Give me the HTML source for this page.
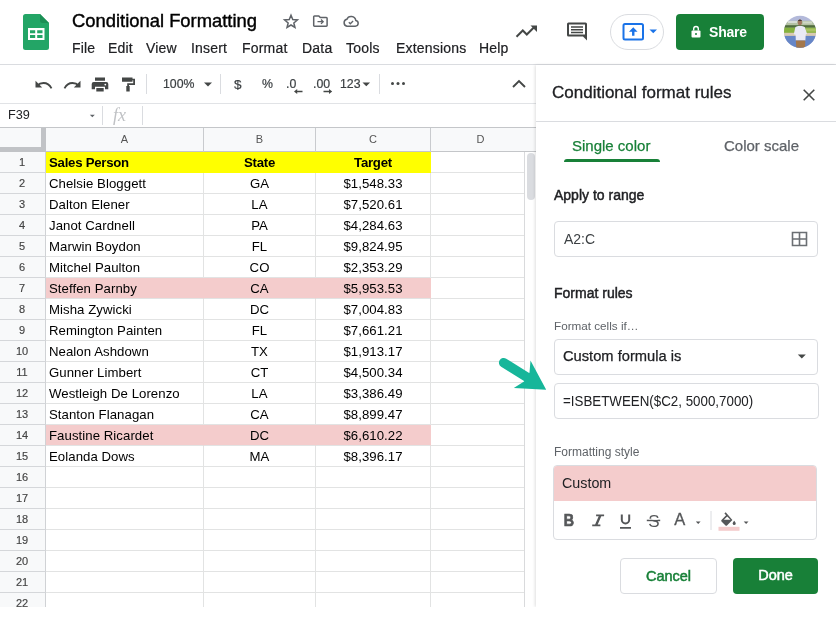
<!DOCTYPE html>
<html lang="en">
<head>
<meta charset="utf-8">
<title>Conditional Formatting</title>
<style>
*{box-sizing:border-box;margin:0;padding:0}
html,body{width:836px;height:637px;overflow:hidden;background:#fff;font-family:"Liberation Sans",sans-serif;color:#202124}
#app{will-change:transform;position:relative;width:836px;height:607px;overflow:hidden;background:#fff}
.abs{position:absolute}
/* top bar */
#top{position:absolute;left:0;top:0;width:836px;height:65px;background:#fff;border-bottom:1px solid #dadce0}
#title{position:absolute;left:72px;top:10px;font-size:18.4px;line-height:22px;color:#000;white-space:nowrap;-webkit-text-stroke:.4px #000}
#menu{position:absolute;left:72px;top:39px;font-size:14px;letter-spacing:.2px;line-height:18px;color:#202124;white-space:nowrap;-webkit-text-stroke:.2px #202124}
#menu span{position:absolute;top:0}
/* toolbar */
#tb{position:absolute;left:0;top:65px;width:536px;height:39px;background:#fff;border-bottom:1px solid #e1e3e6}
#fb{position:absolute;left:0;top:104px;width:536px;height:24px;background:#fff;border-bottom:1px solid #c4c6c9}
#fb .name{position:absolute;left:8px;top:4px;font-size:12.700px;line-height:15px;color:#202124}
#fb .fx{position:absolute;left:113px;top:0px;font-family:"Liberation Serif",serif;font-style:italic;font-size:18px;line-height:22px;color:#c0c2c5}
.tt{position:absolute;top:12px;font-size:12.300px;line-height:15px;color:#3c4043;white-space:nowrap;-webkit-text-stroke:.2px #3c4043}
/* grid */
#grid{position:absolute;left:0;top:128px;width:536px;height:479px;overflow:hidden;background:#fff}
#colh{position:absolute;left:0;top:0;height:24px;width:536px;background:#f8f9fa;border-bottom:1px solid #c4c6c9}
#colh div{position:absolute;top:0;height:24px;font-size:11px;line-height:23px;text-align:center;color:#555;border-right:1px solid #c9cbce}
.r{position:absolute;left:0;height:21px;width:525px}
.rh{position:absolute;left:0;top:0;width:46px;height:21px;background:#f8f9fa;border-right:1px solid #d0d2d5;border-bottom:1px solid #d5d7da;font-size:11px;line-height:20px;text-align:center;color:#444;padding-right:1px;-webkit-text-stroke:.15px #444}
.c{position:absolute;top:0;height:21px;border-right:1px solid #e2e3e3;border-bottom:1px solid #e2e3e3;font-size:13.2px;letter-spacing:.06px;line-height:22px;color:#000;white-space:nowrap;overflow:hidden}
.ca{left:46px;width:158px;padding-left:3px}
.cb{left:204px;width:112px;text-align:center}
.cc{left:316px;width:115px;text-align:center}
.cd{left:431px;width:93px;border-right:none}
.hdr .ca,.hdr .cb,.hdr .cc{background:#ffff00;font-weight:bold;border-color:#ffff00;letter-spacing:-.25px}
.hl .ca,.hl .cb,.hl .cc{background:#f4cccc;border-right-color:#f4cccc}
/* panel */
#panel{position:absolute;left:536px;top:65px;width:300px;height:542px;background:#fff;box-shadow:-1px 0 3px rgba(0,0,0,.13)}
#panel .ttl{position:absolute;left:16px;top:17px;font-size:17px;line-height:22px;color:#202124;white-space:nowrap;-webkit-text-stroke:.3px #202124}
.tab{position:absolute;top:72px;font-size:15px;line-height:18px;white-space:nowrap;-webkit-text-stroke:.25px currentColor}
.sec{position:absolute;left:18px;font-size:14px;line-height:18px;color:#202124;white-space:nowrap;-webkit-text-stroke:.45px #202124}
.lbl{position:absolute;left:18px;font-size:12px;line-height:16px;color:#5f6368;white-space:nowrap}
.box{position:absolute;left:18px;width:264px;height:36px;border:1px solid #dadce0;border-radius:4px;background:#fff;padding-left:9px;line-height:33px;white-space:nowrap}
.btn{position:absolute;border-radius:4px;font-size:14.500px;line-height:35px;text-align:center;-webkit-text-stroke:.5px currentColor;white-space:nowrap}
</style>
</head>
<body>
<div id="app">

<div id="top">
  <svg class="abs" style="left:23px;top:14px" width="26" height="36" viewBox="0 0 26 36">
    <path d="M2.5 0H17l9 9v24.5a2.5 2.5 0 0 1-2.5 2.5h-21A2.5 2.5 0 0 1 0 33.500V2.500A2.500 2.500 0 0 1 2.500 0z" fill="#23a566"/>
    <path d="M17 0l9 9h-6.500A2.500 2.500 0 0 1 17 6.500z" fill="#1c8f55"/>
    <path d="M5 14h16.500v12H5z" fill="#fff"/>
    <path d="M7 16.200h5.200v3H7zM14.200 16.200h5.300v3h-5.300zM7 21.100h5.200v3H7zM14.200 21.100h5.300v3h-5.300z" fill="#23a566"/>
  </svg>
  <svg class="abs" style="left:500px;top:0" width="336" height="64" viewBox="500 0 336 64">
    <!-- trending -->
    <path d="M516.500 36.800l6.300-6.300 4 4 7.800-7.800" fill="none" stroke="#444746" stroke-width="2"/>
    <path d="M530.500 25.500h6.500v6.500z" fill="#444746"/>
    <!-- comment -->
    <path d="M568.500 22.500h17a1.500 1.500 0 0 1 1.500 1.500v16.500l-4-4h-14.500a1.500 1.500 0 0 1-1.500-1.500V24a1.500 1.500 0 0 1 1.500-1.500z" fill="#444746"/>
    <path d="M569 24.500h16v10h-16z" fill="#fff"/>
    <path d="M571 27h12M571 29.700h12M571 32.400h12" stroke="#444746" stroke-width="1.500"/>
    <!-- present pill -->
    <rect x="610.500" y="14.500" width="53" height="35" rx="17.500" fill="#fff" stroke="#dadce0"/>
    <rect x="623.500" y="24" width="19.500" height="15.500" rx="1.500" fill="#fff" stroke="#1a73e8" stroke-width="2"/>
    <path d="M633.250 27.300l4.300 4.500h-3.100v4h-2.400v-4h-3.100z" fill="#1a73e8"/>
    <path d="M649.500 29.500h7.500l-3.750 3.800z" fill="#1a73e8"/>
    <!-- share -->
    <rect x="676" y="14" width="88" height="36" rx="4" fill="#188038"/>
    <path d="M692.500 30.500h7a1 1 0 0 1 1 1v5a1 1 0 0 1-1 1h-7a1 1 0 0 1-1-1v-5a1 1 0 0 1 1-1z" fill="#fff"/>
    <path d="M693.700 30.500v-1.700a2.300 2.300 0 0 1 4.600 0v1.700" fill="none" stroke="#fff" stroke-width="1.400"/>
    <circle cx="696" cy="34" r="1" fill="#188038"/>
    <!-- avatar -->
    <defs><clipPath id="av"><circle cx="800" cy="31.700" r="16"/></clipPath></defs>
    <g clip-path="url(#av)">
      <rect x="784" y="15" width="32" height="34" fill="#b3b9da"/>
      <rect x="784" y="20.800" width="32" height="5" fill="#b4c2a4"/>
      <rect x="788" y="21" width="9" height="2" fill="#d6dcd6"/>
      <rect x="803" y="21.500" width="9" height="2" fill="#cfd8c8"/>
      <rect x="784" y="25.200" width="32" height="2.600" fill="#506c3d"/>
      <rect x="784" y="27.600" width="32" height="5.400" fill="#86b23f"/>
      <rect x="806" y="28.500" width="10" height="3" fill="#a9c364"/>
      <rect x="784" y="32.800" width="32" height="3.200" fill="#d9cab3"/>
      <rect x="784" y="35.900" width="32" height="13" fill="#6686c7"/>
      <ellipse cx="799.900" cy="22.400" rx="2.100" ry="2.800" fill="#a07860"/>
      <path d="M797.900 21a2.100 2 0 0 1 4.100 0z" fill="#4a3a34"/>
      <path d="M795.300 27.300c1.400-1.700 7.900-1.700 9.600 0l2.100 6.500-1.300.8-.3 5.900h-9.600l-.2-5.700-1.800-.6z" fill="#e9eaf5"/>
      <path d="M795.800 40.400h9.500l-.3 8h-8.600z" fill="#a3774b"/>
    </g>
  </svg>
  <div class="abs" style="left:709px;top:23px;font-size:14px;line-height:18px;font-weight:bold;color:#fff;letter-spacing:-.2px">Share</div>
  <svg class="abs" style="left:280px;top:10px" width="84" height="22" viewBox="280 10 84 22">
    <g fill="none" stroke="#5f6368" stroke-width="1.500" stroke-linejoin="miter">
      <path d="M291 15.300l1.750 4.300 4.650.35-3.550 3 1.100 4.500-3.950-2.450-3.950 2.450 1.100-4.500-3.550-3 4.650-.35z"/>
      <path d="M314.500 16h4.300l1.500 1.600h6a.8.800 0 0 1 .8.800v7a.8.800 0 0 1-.8.800h-11.800a.8.800 0 0 1-.8-.8v-8.600a.8.800 0 0 1 .8-.8z"/>
      <path d="M317.500 21.700h5.500M321 19.500l2.200 2.200-2.200 2.200" stroke-width="1.300"/>
      <path d="M347 26.200h8.300a2.900 2.900 0 0 0 .5-5.750 4.700 4.700 0 0 0-9-1.100 3.500 3.500 0 0 0 .2 6.850z"/>
      <path d="M348.800 22.300l1.500 1.500 2.800-2.800" stroke-width="1.300"/>
    </g>
  </svg>
  <div id="title">Conditional Formatting</div>
  <div id="menu">
    <span style="left:0">File</span><span style="left:36px">Edit</span><span style="left:74px">View</span><span style="left:119px">Insert</span><span style="left:170px">Format</span><span style="left:230px">Data</span><span style="left:274px">Tools</span><span style="left:324px">Extensions</span><span style="left:407px">Help</span>
  </div>
</div>

<div id="tb">
  <svg class="abs" style="left:0;top:0" width="536" height="38" viewBox="0 65 536 38">
    <g fill="none" stroke="#444746" stroke-width="1.8" stroke-linecap="butt" stroke-linejoin="miter">
      <!-- undo -->
      <path d="M51.500 88.300c-1.700-3.300-4.600-5.300-8-5.300-2.500 0-4.700 1-6.300 2.700"/>
      <!-- redo -->
      <path d="M64.500 88.300c1.700-3.300 4.600-5.300 8-5.300 2.500 0 4.700 1 6.300 2.700"/>
    </g>
    <g fill="#444746">
      <path d="M35.500 80.800v6.700h6.700z"/>
      <path d="M80.500 80.800v6.700h-6.700z"/>
      <!-- print -->
      <path d="M95 77.500h10v3.300H95zM93.700 82h12.600a2 2 0 0 1 2 2v5.300h-3.300v-2.600H95v2.600h-3.300V84a2 2 0 0 1 2-2zM96.300 88h7.400v3.500h-7.400z"/>
      <circle cx="105.300" cy="84.600" r=".9" fill="#fff"/>
      <!-- paint format -->
      <path d="M122 77.500h10.500v4.300H122zM132.500 78.700h2.500v6.300h-6v1.500h-1.800V83.300h6V80.300h-.7zM126.300 86h3.400v5.500h-3.400z"/>
      <!-- zoom arrow -->
      <path d="M204 82.500h8l-4 4z"/>
      <!-- 123 arrow -->
      <path d="M362.500 82.500h7.600l-3.800 3.800z"/>
      <!-- dots -->
      <circle cx="392.500" cy="83.500" r="1.500"/><circle cx="398" cy="83.500" r="1.500"/><circle cx="403.500" cy="83.500" r="1.500"/>
      <!-- decimal arrows -->
      <path d="M294 91.500l3.200-2.600v1.900h5.300v1.400h-5.300v1.900z"/>
      <path d="M332.200 91.500l-3.200-2.600v1.900h-5.500v1.400h5.500v1.900z"/>
    </g>
    <path d="M513 87l6-6 6 6" fill="none" stroke="#444746" stroke-width="1.900"/>
    <path d="M146.500 74v20M220.500 74v20M379.500 74v20" stroke="#dadce0" stroke-width="1"/>
  </svg>
  <div class="tt" style="left:163px">100%</div>
  <div class="tt" style="left:234px;font-size:13.500px">$</div>
  <div class="tt" style="left:262px">%</div>
  <div class="tt" style="left:286px">.0</div>
  <div class="tt" style="left:313px">.00</div>
  <div class="tt" style="left:340px">123</div>
</div>
<div id="fb"><div class="name">F39</div>
  <svg class="abs" style="left:0;top:0" width="536" height="23" viewBox="0 104 536 23">
    <path d="M89.800 114.700h5l-2.500 2.600z" fill="#5f6368"/>
    <path d="M102.500 106v19M142.500 106v19" stroke="#dadce0" stroke-width="1"/>
  </svg>
  <div class="fx">fx</div></div>

<div id="grid">
  <div id="colh">
    <div style="left:0;width:46px"></div>
    <div style="left:46px;width:158px">A</div>
    <div style="left:204px;width:112px">B</div>
    <div style="left:316px;width:115px">C</div>
    <div style="left:431px;width:99px;border-right:none">D</div>
  </div>
  <div class="abs" style="left:41px;top:0;width:5px;height:24px;background:#c1c3c6"></div>
  <div class="abs" style="left:0;top:19px;width:46px;height:5px;background:#c1c3c6"></div>
  <div class="abs" style="left:524px;top:24px;width:12px;height:456px;background:#fff;border-left:1px solid #d9dadc"></div>
  <div class="abs" style="left:526.500px;top:25px;width:8.500px;height:47px;background:#dadce0;border-radius:4.250px"></div>
  <div id="rows">
<div class="r hdr" style="top:24px"><div class="rh">1</div><div class="c ca">Sales Person</div><div class="c cb">State</div><div class="c cc">Target</div><div class="c cd"></div></div>
<div class="r " style="top:45px"><div class="rh">2</div><div class="c ca">Chelsie Bloggett</div><div class="c cb">GA</div><div class="c cc">$1,548.33</div><div class="c cd"></div></div>
<div class="r " style="top:66px"><div class="rh">3</div><div class="c ca">Dalton Elener</div><div class="c cb">LA</div><div class="c cc">$7,520.61</div><div class="c cd"></div></div>
<div class="r " style="top:87px"><div class="rh">4</div><div class="c ca">Janot Cardnell</div><div class="c cb">PA</div><div class="c cc">$4,284.63</div><div class="c cd"></div></div>
<div class="r " style="top:108px"><div class="rh">5</div><div class="c ca">Marwin Boydon</div><div class="c cb">FL</div><div class="c cc">$9,824.95</div><div class="c cd"></div></div>
<div class="r " style="top:129px"><div class="rh">6</div><div class="c ca">Mitchel Paulton</div><div class="c cb">CO</div><div class="c cc">$2,353.29</div><div class="c cd"></div></div>
<div class="r hl" style="top:150px"><div class="rh">7</div><div class="c ca">Steffen Parnby</div><div class="c cb">CA</div><div class="c cc">$5,953.53</div><div class="c cd"></div></div>
<div class="r " style="top:171px"><div class="rh">8</div><div class="c ca">Misha Zywicki</div><div class="c cb">DC</div><div class="c cc">$7,004.83</div><div class="c cd"></div></div>
<div class="r " style="top:192px"><div class="rh">9</div><div class="c ca">Remington Painten</div><div class="c cb">FL</div><div class="c cc">$7,661.21</div><div class="c cd"></div></div>
<div class="r " style="top:213px"><div class="rh">10</div><div class="c ca">Nealon Ashdown</div><div class="c cb">TX</div><div class="c cc">$1,913.17</div><div class="c cd"></div></div>
<div class="r " style="top:234px"><div class="rh">11</div><div class="c ca">Gunner Limbert</div><div class="c cb">CT</div><div class="c cc">$4,500.34</div><div class="c cd"></div></div>
<div class="r " style="top:255px"><div class="rh">12</div><div class="c ca">Westleigh De Lorenzo</div><div class="c cb">LA</div><div class="c cc">$3,386.49</div><div class="c cd"></div></div>
<div class="r " style="top:276px"><div class="rh">13</div><div class="c ca">Stanton Flanagan</div><div class="c cb">CA</div><div class="c cc">$8,899.47</div><div class="c cd"></div></div>
<div class="r hl" style="top:297px"><div class="rh">14</div><div class="c ca">Faustine Ricardet</div><div class="c cb">DC</div><div class="c cc">$6,610.22</div><div class="c cd"></div></div>
<div class="r " style="top:318px"><div class="rh">15</div><div class="c ca">Eolanda Dows</div><div class="c cb">MA</div><div class="c cc">$8,396.17</div><div class="c cd"></div></div>
<div class="r " style="top:339px"><div class="rh">16</div><div class="c ca"></div><div class="c cb"></div><div class="c cc"></div><div class="c cd"></div></div>
<div class="r " style="top:360px"><div class="rh">17</div><div class="c ca"></div><div class="c cb"></div><div class="c cc"></div><div class="c cd"></div></div>
<div class="r " style="top:381px"><div class="rh">18</div><div class="c ca"></div><div class="c cb"></div><div class="c cc"></div><div class="c cd"></div></div>
<div class="r " style="top:402px"><div class="rh">19</div><div class="c ca"></div><div class="c cb"></div><div class="c cc"></div><div class="c cd"></div></div>
<div class="r " style="top:423px"><div class="rh">20</div><div class="c ca"></div><div class="c cb"></div><div class="c cc"></div><div class="c cd"></div></div>
<div class="r " style="top:444px"><div class="rh">21</div><div class="c ca"></div><div class="c cb"></div><div class="c cc"></div><div class="c cd"></div></div>
<div class="r " style="top:465px"><div class="rh">22</div><div class="c ca"></div><div class="c cb"></div><div class="c cc"></div><div class="c cd"></div></div>
  </div>
</div>

<div id="panel">
  <div class="ttl">Conditional format rules</div>
  <svg class="abs" style="left:266px;top:23px" width="14" height="14" viewBox="0 0 14 14"><path d="M1.700 1.700l10.600 10.600M12.300 1.700L1.700 12.300" stroke="#444746" stroke-width="1.600" fill="none"/></svg>
  <div class="abs" style="left:0;top:56px;width:300px;height:1px;background:#dadce0"></div>
  <div class="tab" style="left:36px;color:#188038">Single color</div>
  <div class="abs" style="left:28px;top:94px;width:96px;height:3px;background:#188038;border-radius:3px 3px 0 0"></div>
  <div class="tab" style="left:188px;color:#5f6368">Color scale</div>
  <div class="sec" style="top:121px">Apply to range</div>
  <div class="box" style="top:156px"><span style="font-size:14px;color:#3c4043">A2:C</span>
    <svg class="abs" style="left:236px;top:9px" width="17" height="16" viewBox="0 0 17 16"><path d="M1.500 1.500h14v13h-14zM8.500 1.500v13M1.500 8h14" fill="none" stroke="#6b6f73" stroke-width="1.600"/></svg>
  </div>
  <div class="sec" style="top:219px">Format rules</div>
  <div class="lbl" style="top:253px;font-size:11.700px">Format cells if…</div>
  <div class="box" style="top:274px"><span style="position:relative;top:-1px;left:-1px;font-size:14.700px;-webkit-text-stroke:.25px #202124;color:#202124">Custom formula is</span>
    <svg class="abs" style="left:242px;top:14px" width="10" height="6" viewBox="0 0 10 6"><path d="M.8.500h8l-4 4z" fill="#444746"/></svg>
  </div>
  <div class="box" style="top:318px;width:265px"><span style="display:inline-block;font-size:14.500px;color:#202124;transform:scaleX(.92);transform-origin:0 50%;margin-left:-1px">=ISBETWEEN($C2, 5000,7000)</span></div>
  <div class="lbl" style="top:379px">Formatting style</div>
  <div class="abs" style="left:17px;top:400px;width:264px;height:75px;border:1px solid #dadce0;border-radius:4px;background:#fff;overflow:hidden">
    <div class="abs" style="left:0;top:0;width:263px;height:35px;background:#f4cccc"></div>
    <div class="abs" style="left:8px;top:8px;font-size:14.300px;line-height:18px;color:#202124">Custom</div>
    <svg class="abs" style="left:0;top:35px" width="263" height="39" viewBox="554.500 500.500 263 39">
      <g fill="#555759" font-family="Liberation Sans, sans-serif">
        <text transform="translate(564.3,525.8) scale(.84,1)" font-size="17" font-weight="bold" style="font-weight:700" stroke="#555759" stroke-width=".7">B</text>
        <path d="M596.6 514h8v1.7h-2.8l-3.6 8.4h2.7v1.7h-8.2v-1.7h2.9l3.6-8.400h-2.600z"/>
        <path d="M621.300 514v5.200a4.700 4.700 0 0 0 9.400 0V514h-2v5.300a2.700 2.700 0 0 1-5.400 0V514zM620.500 526.600h11v1.600h-11z"/>
        <text x="648.8" y="526.2" font-size="17">S</text>
        <rect x="647.300" y="519.200" width="13.400" height="1.500"/>
        <text x="674.8" y="524" font-size="16.5" stroke="#555759" stroke-width=".3">A</text>
        <path d="M696.300 521h4.800l-2.400 2.400zM744.200 521h4.800l-2.400 2.400z"/>
        <!-- bucket -->
        <path d="M726.200 511.800l-1.300 1.300 1.700 1.700-4.600 4.600a1.100 1.100 0 0 0 0 1.500l4 4a1.100 1.100 0 0 0 1.500 0l5.400-5.400zM727.700 516l3.300 3.300h-6.600z"/>
        <path d="M734.700 520.300s-1.500 1.700-1.500 2.700a1.500 1.500 0 0 0 3 0c0-1-1.500-2.700-1.500-2.700z"/>
      </g>
      <rect x="649.800" y="518.200" width="8.500" height="1" fill="#fff"/>
      <rect x="719" y="526.3" width="21" height="4" fill="#f4cccc"/>
      <path d="M711.500 510.500v19" stroke="#dadce0" stroke-width="1"/>
    </svg>
  </div>
  <div class="btn" style="left:84px;top:493px;width:97px;height:36px;border:1px solid #dadce0;color:#188038;background:#fff">Cancel</div>
  <div class="btn" style="left:197px;top:493px;width:85px;height:36px;color:#fff;background:#188038">Done</div>
</div>

<svg class="abs" style="left:490px;top:350px" width="70" height="50" viewBox="490 350 70 50">
  <path d="M503.700 362.700L527 377.300" stroke="#17b69a" stroke-width="9.600" stroke-linecap="round" fill="none"/>
  <path d="M530.500 360.400L546.200 389.800L513.800 388.100L524 381.500L529.500 372.500z" fill="#17b69a"/>
</svg>
</div>
</body>
</html>
